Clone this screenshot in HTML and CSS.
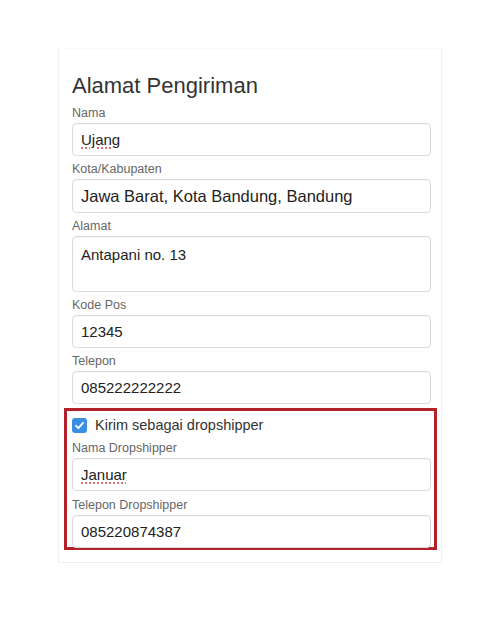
FILE: index.html
```html
<!DOCTYPE html>
<html>
<head>
<meta charset="utf-8">
<link rel="stylesheet" href="styles.css">
</head>
<body>
<div class="card">
  <h1 class="title">Alamat Pengiriman</h1>
  <div class="field">
    <div class="label">Nama</div>
    <div class="input"><span class="spell">Ujang</span></div>
  </div>
  <div class="field">
    <div class="label">Kota/Kabupaten</div>
    <div class="input big">Jawa Barat, Kota Bandung, Bandung</div>
  </div>
  <div class="field">
    <div class="label">Alamat</div>
    <div class="input area">Antapani no. 13</div>
  </div>
  <div class="field">
    <div class="label">Kode Pos</div>
    <div class="input">12345</div>
  </div>
  <div class="field">
    <div class="label">Telepon</div>
    <div class="input">085222222222</div>
  </div>
  <div class="highlight">
    <div class="check-row">
      <span class="checkbox"><svg width="11" height="11" viewBox="0 0 11 11"><path d="M2 5.8 L4.4 8.2 L9 2.8" fill="none" stroke="#fff" stroke-width="1.8" stroke-linecap="round" stroke-linejoin="round"/></svg></span>
      <span class="check-text">Kirim sebagai dropshipper</span>
    </div>
    <div class="field">
      <div class="label">Nama Dropshipper</div>
      <div class="input"><span class="spell">Januar</span></div>
    </div>
    <div class="field last">
      <div class="label">Telepon Dropshipper</div>
      <div class="input">085220874387</div>
    </div>
  </div>
</div>
</body>
</html>
```

FILE: styles.css
```css
html, body {
  margin: 0;
  padding: 0;
  background: #ffffff;
}
body {
  font-family: "Liberation Sans", Arial, sans-serif;
  color: #222;
}
.card {
  margin: 48px 0 0 58px;
  width: 384px;
  height: 515px;
  box-sizing: border-box;
  border: 1px solid #f0f0f0;
  border-top-color: #fafafa;
  padding: 23px 10px 0 13px;
  background: #fff;
}
.title {
  margin: 0 0 3px 0;
  font-size: 22px;
  font-weight: normal;
  line-height: 28px;
  color: #333;
}
.field {
  margin-top: 5px;
}
.label {
  font-size: 12.5px;
  line-height: 16px;
  color: #666;
  margin-bottom: 2px;
}
.input {
  height: 33px;
  box-sizing: border-box;
  border: 1px solid #dcdcdc;
  border-radius: 4px;
  box-shadow: inset 0 1px 1px rgba(0,0,0,0.04);
  padding: 0 8px;
  font-size: 15px;
  line-height: 31px;
  color: #222;
  background: #fff;
}
.input.big {
  height: 34px;
  font-size: 16.5px;
  line-height: 32px;
}
.input.area {
  height: 56px;
  line-height: 20px;
  padding-top: 8px;
}
.spell {
  text-decoration: underline dotted #d04040;
  text-underline-offset: 3px;
}
.highlight {
  margin: 4px -6px 0 -8px;
  border: 3px solid #b3222b;
  padding: 4px 3px 0 5px;
  height: 142px;
  box-sizing: border-box;
}
.check-row {
  display: flex;
  align-items: center;
  gap: 8px;
  height: 20px;
}
.checkbox {
  width: 15px;
  height: 15px;
  border-radius: 3px;
  background: #3a8fe3;
  display: flex;
  align-items: center;
  justify-content: center;
}
.check-text {
  font-size: 14.5px;
  color: #333;
}
.field.last {
  margin-top: 6px;
}
```
